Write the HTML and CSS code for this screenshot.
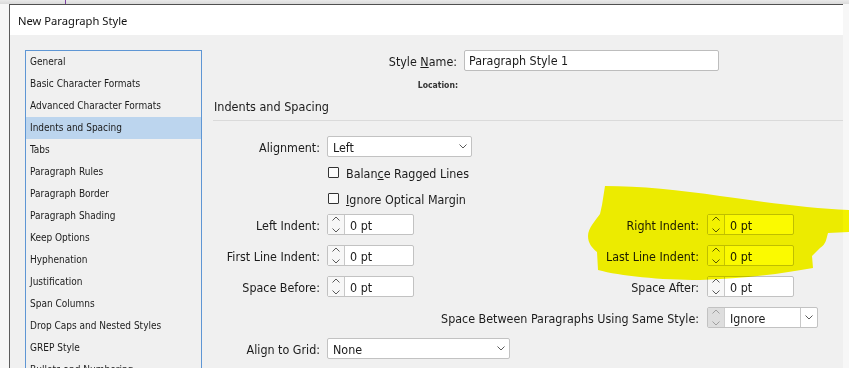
FILE: index.html
```html
<!DOCTYPE html>
<html>
<head>
<meta charset="utf-8">
<link rel="stylesheet" href="styles.css">
</head>
<body>
<div class="topstrip"><span class="purple"></span></div>
<div class="window">
  <div class="titlebar">New Paragraph Style</div>
  <div class="dialog">
    <ul class="catlist">
      <li>General</li>
      <li>Basic Character Formats</li>
      <li>Advanced Character Formats</li>
      <li class="selected">Indents and Spacing</li>
      <li>Tabs</li>
      <li>Paragraph Rules</li>
      <li>Paragraph Border</li>
      <li>Paragraph Shading</li>
      <li>Keep Options</li>
      <li>Hyphenation</li>
      <li>Justification</li>
      <li>Span Columns</li>
      <li>Drop Caps and Nested Styles</li>
      <li>GREP Style</li>
      <li>Bullets and Numbering</li>
    </ul>
    <div class="panel">
      <div class="name-row">
        <span class="name-label">Style <u>N</u>ame:</span>
        <div class="textbox">Paragraph Style 1</div>
      </div>
      <div class="loc-row"><span class="loc-label">Location:</span></div>
      <div class="section-title">Indents and Spacing</div>
      <div class="form">
        <div class="row r-first">
          <span class="lbl">Alignment:</span>
          <div class="select sel-align"><span class="txt">Left</span>
            <svg class="chev" width="8" height="5" viewBox="0 0 8 5"><polyline points="0.5,0.5 4,4 7.5,0.5"/></svg>
          </div>
        </div>
        <div class="row r-check">
          <span class="lbl"></span>
          <span class="checkbox"></span><span class="cbtext">Balan<u>c</u>e Ragged Lines</span>
        </div>
        <div class="row r-check">
          <span class="lbl"></span>
          <span class="checkbox"></span><span class="cbtext"><u>I</u>gnore Optical Margin</span>
        </div>
        <div class="row r-spin">
          <span class="lbl">Left Indent:</span>
          <div class="spinner"><span class="arrows"><svg width="16" height="19" viewBox="0 0 16 19"><polyline points="4.5,5.5 8,2 11.5,5.5"/><polyline points="4.5,13.5 8,17 11.5,13.5"/></svg></span><span class="val">0 pt</span></div>
          <span class="lbl2">Right Indent:</span>
          <div class="spinner"><span class="arrows"><svg width="16" height="19" viewBox="0 0 16 19"><polyline points="4.5,5.5 8,2 11.5,5.5"/><polyline points="4.5,13.5 8,17 11.5,13.5"/></svg></span><span class="val">0 pt</span></div>
        </div>
        <div class="row r-spin">
          <span class="lbl">First Line Indent:</span>
          <div class="spinner"><span class="arrows"><svg width="16" height="19" viewBox="0 0 16 19"><polyline points="4.5,5.5 8,2 11.5,5.5"/><polyline points="4.5,13.5 8,17 11.5,13.5"/></svg></span><span class="val">0 pt</span></div>
          <span class="lbl2">Last Line Indent:</span>
          <div class="spinner"><span class="arrows"><svg width="16" height="19" viewBox="0 0 16 19"><polyline points="4.5,5.5 8,2 11.5,5.5"/><polyline points="4.5,13.5 8,17 11.5,13.5"/></svg></span><span class="val">0 pt</span></div>
        </div>
        <div class="row r-spin">
          <span class="lbl">Space Before:</span>
          <div class="spinner"><span class="arrows"><svg width="16" height="19" viewBox="0 0 16 19"><polyline points="4.5,5.5 8,2 11.5,5.5"/><polyline points="4.5,13.5 8,17 11.5,13.5"/></svg></span><span class="val">0 pt</span></div>
          <span class="lbl2">Space After:</span>
          <div class="spinner"><span class="arrows"><svg width="16" height="19" viewBox="0 0 16 19"><polyline points="4.5,5.5 8,2 11.5,5.5"/><polyline points="4.5,13.5 8,17 11.5,13.5"/></svg></span><span class="val">0 pt</span></div>
        </div>
        <div class="row r-spin">
          <span class="lbl-wide">Space Between Paragraphs Using Same Style:</span>
          <div class="combo">
            <span class="arrows disabled"><svg width="16" height="19" viewBox="0 0 16 19"><polyline points="4.5,5.5 8,2 11.5,5.5"/><polyline points="4.5,13.5 8,17 11.5,13.5"/></svg></span>
            <span class="combo-val">Ignore</span>
            <span class="combo-btn"><svg class="chev" width="8" height="5" viewBox="0 0 8 5"><polyline points="0.5,0.5 4,4 7.5,0.5"/></svg></span>
          </div>
        </div>
        <div class="row r-spin">
          <span class="lbl">Align to Grid:</span>
          <div class="select sel-grid"><span class="txt">None</span>
            <svg class="chev" width="8" height="5" viewBox="0 0 8 5"><polyline points="0.5,0.5 4,4 7.5,0.5"/></svg>
          </div>
        </div>
      </div>
    </div>
  </div>
</div>
<svg class="marker" width="849" height="368" viewBox="0 0 849 368">
  <path d="M605,186 C640,186 680,190 720,196 C770,203 810,208 849,210 L849,232 L828,233 C826,240 826,244 820,248 L812,256 L813,268 C780,274 740,279 700,280 C660,280 620,276 598,270 L597,252 C592,248 588,243 588,236 C588,228 596,220 600,214 L602,205 Z"/>
</svg>
</body>
</html>
```
FILE: styles.css
```css
html, body {
  margin: 0;
  padding: 0;
}
body {
  width: 849px;
  height: 368px;
  overflow: hidden;
  background: #f7f7f7;
  font-family: "DejaVu Sans Condensed", "DejaVu Sans", sans-serif;
  font-stretch: condensed;
  color: #1b1b1b;
  position: relative;
}
.topstrip {
  height: 4px;
  background: linear-gradient(#e9e9e9, #dadada);
  position: relative;
}
.purple {
  position: absolute;
  left: 65px;
  top: 0;
  width: 1px;
  height: 4px;
  background: #7a3fa0;
}
.window {
  margin-left: 9px;
  width: 833px;
  border-left: 1px solid #5d5d5d;
  border-top: 1px solid #505050;
  background: #f0f0f0;
}
.titlebar {
  height: 30px;
  line-height: 31px;
  background: #ffffff;
  padding-left: 8px;
  font-family: "Noto Sans", "DejaVu Sans", sans-serif;
  font-stretch: normal;
  font-size: 11.2px;
  color: #111;
}
.dialog {
  display: flex;
  padding-top: 15px;
  height: 400px;
}
.catlist {
  list-style: none;
  margin: 0 0 0 15px;
  padding: 0;
  width: 175px;
  border: 1px solid #5e96d4;
  font-size: 10px;
  flex: none;
}
.catlist li {
  height: 22px;
  line-height: 22px;
  padding-left: 4px;
  white-space: nowrap;
}
.catlist li.selected {
  background: #bcd5ee;
}
.panel {
  margin-left: 11px;
  flex: 1;
  font-size: 12.4px;
}
.name-row {
  display: flex;
  align-items: center;
  height: 21px;
}
.name-label {
  width: 244px;
  text-align: right;
  margin-right: 7px;
  padding-top: 1px;
}
.textbox {
  width: 249px;
  height: 19px;
  line-height: 20px;
  padding-left: 4px;
  background: #fff;
  border: 1px solid #bdbdbd;
  border-radius: 2px;
}
.loc-row {
  margin-top: 7px;
  height: 14px;
  line-height: 14px;
  width: 245px;
  text-align: right;
  font-size: 8.6px;
  font-weight: bold;
  color: #333;
}
.section-title {
  margin-top: 7px;
  height: 16px;
  line-height: 16px;
  padding-left: 1px;
  font-size: 12.5px;
  font-stretch: condensed;
  padding-bottom: 5px;
  border-bottom: 1px solid #dadada;
}
.form {
  padding-top: 15px;
}
.row {
  display: flex;
  align-items: center;
  height: 21px;
}
.r-check {
  margin-top: 5px;
}
.r-check + .r-spin {
  margin-top: 5px;
}
.r-spin + .r-spin {
  margin-top: 10px;
}
.lbl, .lbl2, .lbl-wide, .cbtext, .txt {
  padding-top: 2px;
}
.lbl {
  width: 107px;
  margin-right: 7px;
  text-align: right;
  flex: none;
  white-space: nowrap;
}
.lbl2 {
  width: 285px;
  margin-right: 8px;
  text-align: right;
  flex: none;
  white-space: nowrap;
}
.lbl-wide {
  width: 486px;
  margin-right: 8px;
  text-align: right;
  flex: none;
  white-space: nowrap;
}
.select {
  box-sizing: border-box;
  height: 21px;
  background: #fff;
  border: 1px solid #c2c2c2;
  border-radius: 2px;
  display: flex;
  align-items: center;
  justify-content: space-between;
  padding: 0 4px 0 5px;
  flex: none;
}
.sel-align { width: 145px; }
.sel-grid { width: 183px; }
.chev {
  display: block;
}
.chev polyline,
.spinner polyline,
.combo polyline {
  fill: none;
  stroke: #5a5a5a;
  stroke-width: 1;
}
.checkbox {
  box-sizing: border-box;
  width: 11px;
  height: 11px;
  margin-left: 1px;
  border: 1px solid #333;
  border-radius: 1px;
  background: #fbfbfb;
  flex: none;
}
.cbtext {
  margin-left: 7px;
}
.spinner {
  box-sizing: border-box;
  width: 87px;
  height: 21px;
  border: 1px solid #c2c2c2;
  border-radius: 2px;
  display: flex;
  flex: none;
  background: #fff;
}
.arrows {
  width: 16px;
  height: 19px;
  border-right: 1px solid #c8c8c8;
  background: #f7f7f7;
  flex: none;
}
.arrows svg { display: block; }
.val {
  padding-left: 5px;
  line-height: 21px;
}
.combo {
  box-sizing: border-box;
  height: 21px;
  width: 111px;
  display: flex;
  flex: none;
  border: 1px solid #c2c2c2;
  border-radius: 2px;
  background: #fff;
}
.arrows.disabled {
  background: #dedede;
  border-right: 1px solid #cfcfcf;
}
.arrows.disabled polyline {
  stroke: #a0a0a0;
}
.combo-val {
  width: 70px;
  padding-left: 5px;
  line-height: 21px;
  border-right: 1px solid #c8c8c8;
}
.combo-btn {
  flex: 1;
  display: flex;
  align-items: center;
  justify-content: center;
}
.marker {
  position: absolute;
  left: 0;
  top: 0;
  pointer-events: none;
  mix-blend-mode: multiply;
}
.marker path {
  fill: #fbfa00;
}
```
